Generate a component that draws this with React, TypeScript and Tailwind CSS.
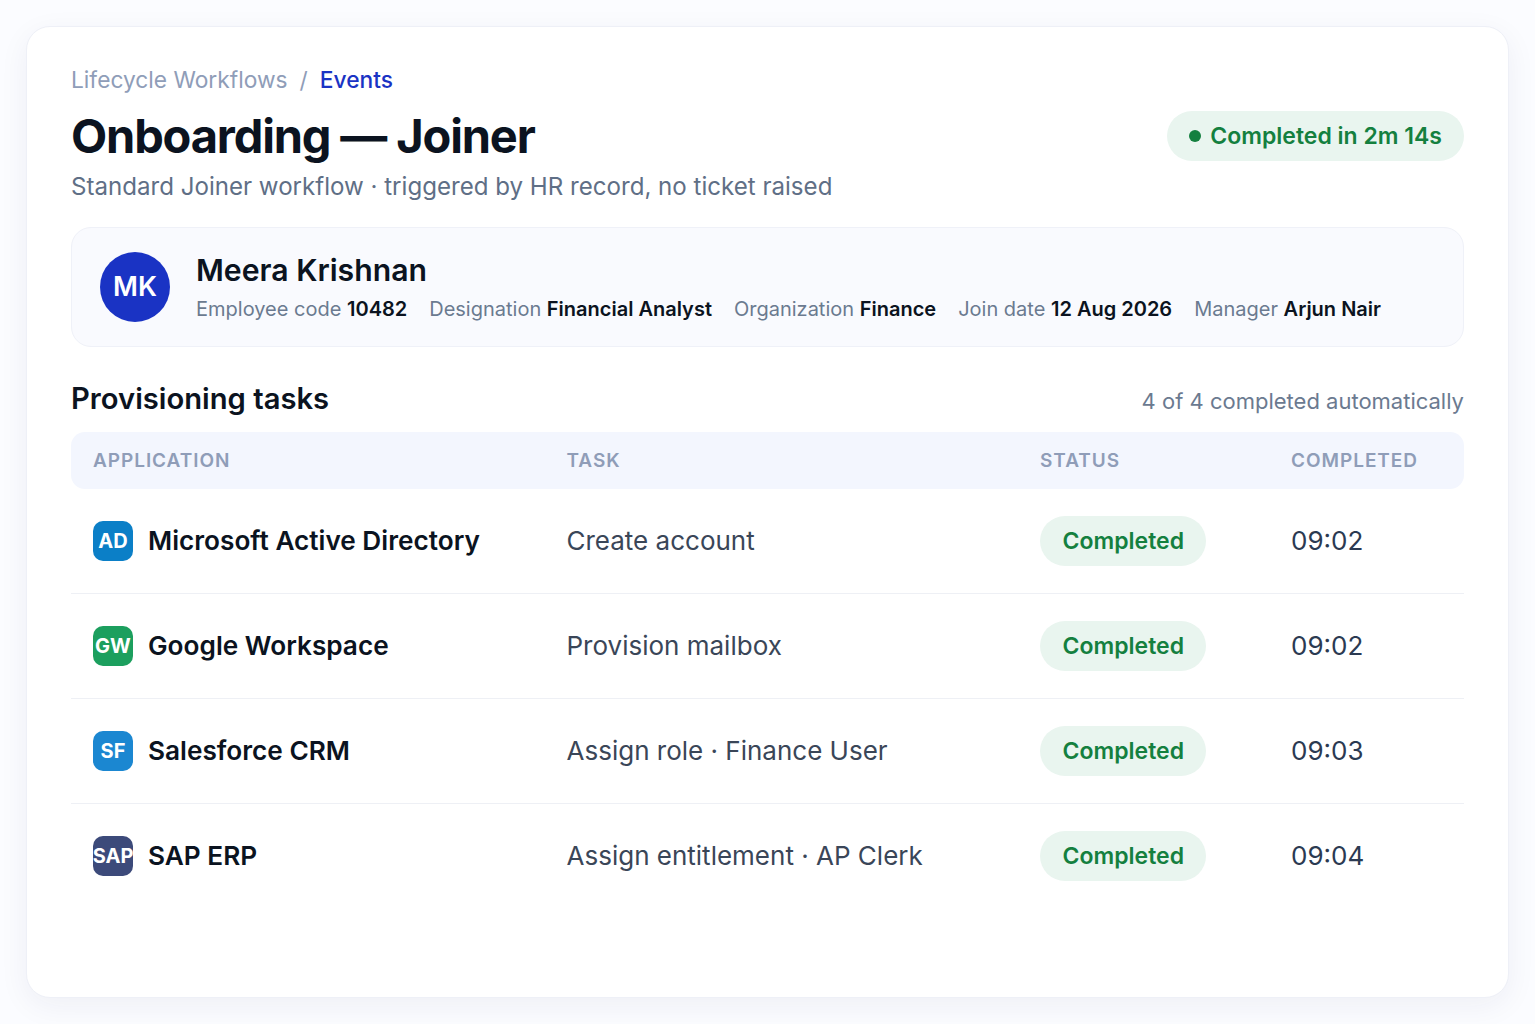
const meta = [
  ["Employee code", "10482"],
  ["Designation", "Financial Analyst"],
  ["Organization", "Finance"],
  ["Join date", "12 Aug 2026"],
  ["Manager", "Arjun Nair"],
];

const rows = [
  { code: "AD", color: "bg-[#0b7fc7]", name: "Microsoft Active Directory", task: "Create account", time: "09:02" },
  { code: "GW", color: "bg-[#1c9f5e]", name: "Google Workspace", task: "Provision mailbox", time: "09:02" },
  { code: "SF", color: "bg-[#1b87d1]", name: "Salesforce CRM", task: "Assign role · Finance User", time: "09:03" },
  { code: "SAP", color: "bg-[#3c4a7a]", name: "SAP ERP", task: "Assign entitlement · AP Clerk", time: "09:04" },
];

const cols = "grid grid-cols-[473.5px_473.5px_251px_1fr] items-center";

export default function App() {
  return (
    <div className="h-screen bg-[#fbfcff] p-[26px] font-['Inter',sans-serif]">
      <div className="h-full rounded-[24px] border border-[#eef0f7] bg-white px-[44px] pt-[38px] shadow-[0_8px_30px_rgba(30,41,90,0.06)]">
        <div className="flex h-[30px] items-center text-[22.75px] leading-[30px] text-[#8f9db8]">
          <span>Lifecycle Workflows</span>
          <span className="mx-[12px]">/</span>
          <span className="font-medium text-[#1a33c4]">Events</span>
        </div>
        <div className="mt-[13px] flex items-center justify-between">
          <h1 className="text-[47px] leading-[56px] font-bold tracking-[-1.16px] text-[#0b1320]">Onboarding — Joiner</h1>
          <div className="flex h-[50px] items-center gap-[9.5px] rounded-full bg-[#e9f5ef] px-[22px] text-[23px] font-semibold text-[#14803f]">
            <span className="h-3 w-3 rounded-full bg-[#14803f]" />
            Completed in 2m 14s
          </div>
        </div>
        <p className="mt-[7px] text-[24.1px] leading-[32px] text-[#5f6f86]">Standard Joiner workflow · triggered by HR record, no ticket raised</p>

        <div className="mt-[24px] flex h-[120px] items-center gap-[26px] rounded-[20px] border border-[#eff1f8] bg-[#f9fafe] px-[28px]">
          <div className="flex h-[70px] w-[70px] items-center justify-center rounded-full bg-[#1a33c4] text-[27px] font-semibold text-white">MK</div>
          <div>
            <div className="text-[30.2px] leading-[38px] font-semibold text-[#0b1320]">Meera Krishnan</div>
            <div className="mt-[6px] flex gap-[22px] text-[20px] leading-[28px] text-[#6b7a90]">
              {meta.map(([k, v]) => (
                <span key={k}>
                  {k} <span className="font-semibold text-[#0b1320]">{v}</span>
                </span>
              ))}
            </div>
          </div>
        </div>

        <div className="mt-[33px] flex h-[36px] items-center justify-between">
          <h2 className="mt-[2px] text-[29.2px] leading-[36px] font-semibold text-[#0b1320]">Provisioning tasks</h2>
          <span className="mt-[7px] text-[22px] text-[#6b7a90]">4 of 4 completed automatically</span>
        </div>

        <div className={`${cols} mt-[16px] h-[57px] rounded-[14px] bg-[#f3f6fe] pt-[2px] pl-[22px] text-[19px] font-semibold tracking-[0.95px] text-[#8f9db8]`}>
          <span>APPLICATION</span>
          <span>TASK</span>
          <span>STATUS</span>
          <span>COMPLETED</span>
        </div>

        {rows.map((r, i) => (
          <div key={r.code} className={`${cols} h-[105px] border-b pl-[22px] ${i < rows.length - 1 ? "border-[#eef0f5]" : "border-transparent"}`}>
            <div className="flex items-center gap-[15px]">
              <div className={`flex h-10 w-10 items-center justify-center overflow-hidden rounded-[10px] text-[20px] font-bold text-white ${r.color}`}>{r.code}</div>
              <span className="text-[26.2px] leading-[40px] font-semibold text-[#0b1320]">{r.name}</span>
            </div>
            <span className="text-[26px] leading-[38px] text-[#3a4658]">{r.task}</span>
            <div>
              <span className="inline-flex h-[50px] items-center rounded-full bg-[#e9f5ef] px-[22.5px] pt-[1px] text-[23px] font-semibold text-[#14803f]">Completed</span>
            </div>
            <span className="text-[26px] leading-[38px] text-[#2b3a52]">{r.time}</span>
          </div>
        ))}
      </div>
    </div>
  );
}
